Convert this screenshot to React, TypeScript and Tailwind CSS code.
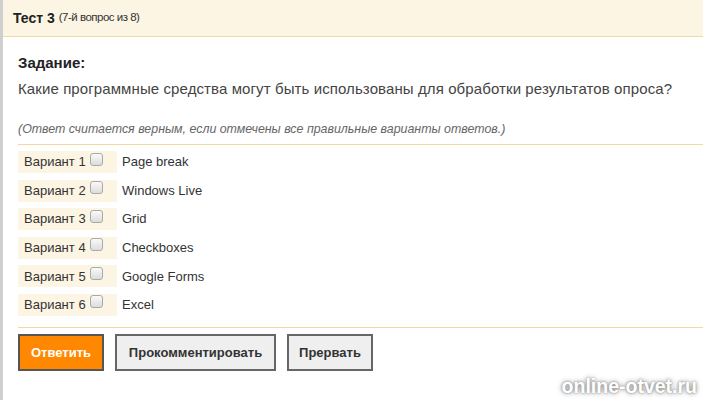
import React from "react";

const options = ["Page break", "Windows Live", "Grid", "Checkboxes", "Google Forms", "Excel"];

export default function App() {
  return (
    <div
      className="relative w-[703px] h-[400px] bg-white border-l-[3px] border-[#cfcfcf] overflow-hidden text-[#333]"
      style={{ fontFamily: '"Liberation Sans", Arial, sans-serif' }}
    >
      <div className="h-[37px] bg-[#fdf5e3] border-b border-[#f2d9a2] flex items-center pl-[10px]">
        <span className="font-bold text-[14px] text-[#222]">Тест 3</span>
        <span className="text-[11.5px] ml-[4px] text-[#333] tracking-[-0.5px]">(7-й вопрос из 8)</span>
      </div>
      <div className="pl-[15px]">
        <div className="pt-[16px] font-bold text-[15px] text-[#222] leading-[20px]">Задание:</div>
        <div className="mt-[6px] text-[15px] text-[#444] leading-[20px] tracking-[0.1px]">
          Какие программные средства могут быть использованы для обработки результатов опроса?
        </div>
        <div className="mt-[22px] text-[12.4px] italic text-[#666] leading-[16px]">
          (Ответ считается верным, если отмечены все правильные варианты ответов.)
        </div>
        <div className="mt-[7px] border-t border-[#f2d9a2] pt-[6px] flex flex-col gap-[6.6px]">
          {options.map((o, i) => (
            <div key={o} className="flex items-center h-[22px]">
              <div className="w-[99px] h-[22px] bg-[#fdf5e3] flex items-center pl-[6px] text-[13px] text-[#333]">
                <span>Вариант {i + 1}</span>
                <span className="ml-[4px] mb-[6px] w-[13px] h-[13px] rounded-[3px] border border-[#a9a9a9] bg-gradient-to-b from-[#fafafa] to-[#dcdcdc]"></span>
              </div>
              <div className="ml-[5px] text-[13px] text-[#333]">{o}</div>
            </div>
          ))}
        </div>
        <div className="mt-[11px] border-t border-[#f2d9a2] pt-[6px] flex gap-[11px]">
          <button className="h-[37px] w-[86px] bg-[#ff8800] border-2 border-[#555] text-white font-bold text-[13px]">
            Ответить
          </button>
          <button className="h-[37px] w-[161px] bg-[#efefef] border-2 border-[#666] text-[#333] font-bold text-[13px]">
            Прокомментировать
          </button>
          <button className="h-[37px] w-[86px] bg-[#efefef] border-2 border-[#666] text-[#333] font-bold text-[13px]">
            Прервать
          </button>
        </div>
      </div>
      <div
        className="absolute right-[6px] bottom-[3px] text-white font-bold text-[19.5px] leading-[22px]"
        style={{ textShadow: "0 0 5px #777, 0 0 2px #999" }}
      >
        online-otvet.ru
      </div>
    </div>
  );
}
